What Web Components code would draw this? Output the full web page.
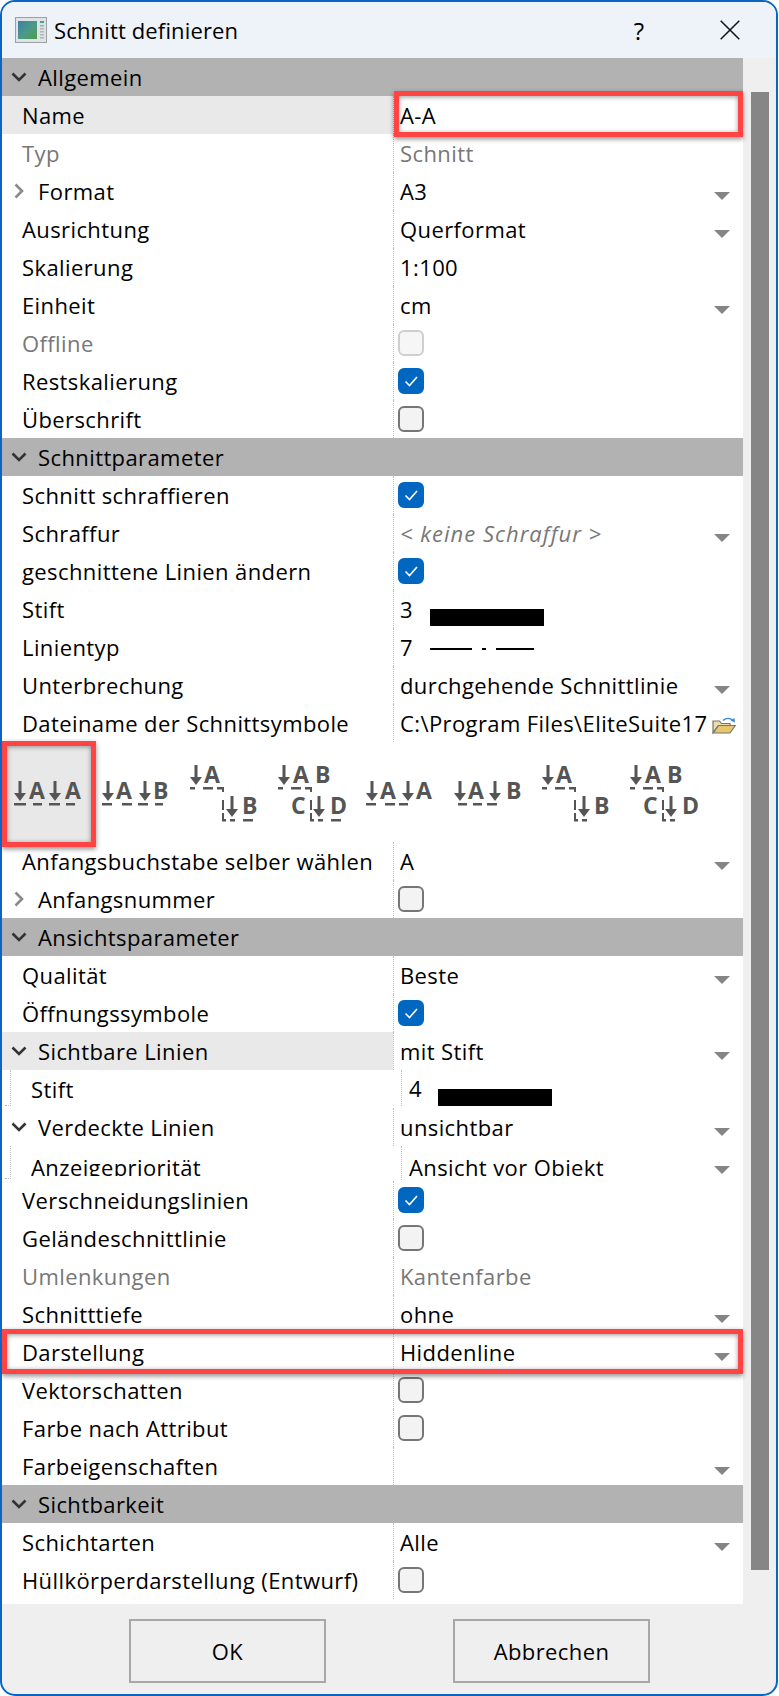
<!DOCTYPE html>
<html lang="de"><head><meta charset="utf-8"><title>Schnitt definieren</title>
<style>
html,body{margin:0;padding:0;background:#fff;width:779px;height:1696px;overflow:hidden}
body{font:22px "Open Sans","Noto Sans",sans-serif;letter-spacing:.4px;color:#000}
</style></head><body>
<x-dialog>
<x-titlebar slot="title">Schnitt definieren</x-titlebar>
<x-section label="Allgemein"></x-section>
<x-row label="Name" value="A-A" hl></x-row>
<x-row label="Typ" value="Schnitt" muted labelmuted></x-row>
<x-row label="Format" value="A3" kind="drop" exp="closed"></x-row>
<x-row label="Ausrichtung" value="Querformat" kind="drop"></x-row>
<x-row label="Skalierung" value="1:100"></x-row>
<x-row label="Einheit" value="cm" kind="drop"></x-row>
<x-row label="Offline" kind="disabled" labelmuted></x-row>
<x-row label="Restskalierung" kind="checked"></x-row>
<x-row label="Überschrift" kind="check"></x-row>
<x-section label="Schnittparameter"></x-section>
<x-row label="Schnitt schraffieren" kind="checked"></x-row>
<x-row label="Schraffur" value="&lt; keine Schraffur &gt;" kind="drop" italic></x-row>
<x-row label="geschnittene Linien ändern" kind="checked"></x-row>
<x-row label="Stift" value="3"><x-pen></x-pen></x-row>
<x-row label="Linientyp" value="7"><x-pen type="dash"></x-pen></x-row>
<x-row label="Unterbrechung" value="durchgehende Schnittlinie" kind="drop"></x-row>
<x-row label="Dateiname der Schnittsymbole" value="C:\Program Files\EliteSuite17" kind="folder"></x-row>
<x-symbols></x-symbols>
<x-row label="Anfangsbuchstabe selber wählen" value="A" kind="drop"></x-row>
<x-row label="Anfangsnummer" kind="check" exp="closed"></x-row>
<x-section label="Ansichtsparameter"></x-section>
<x-row label="Qualität" value="Beste" kind="drop"></x-row>
<x-row label="Öffnungssymbole" kind="checked"></x-row>
<x-row label="Sichtbare Linien" value="mit Stift" kind="drop" exp="open" hl></x-row>
<x-row label="Stift" value="4" sub><x-pen></x-pen></x-row>
<x-row label="Verdeckte Linien" value="unsichtbar" kind="drop" exp="open"></x-row>
<x-row label="Anzeigepriorität" value="Ansicht vor Objekt" kind="drop" sub clip></x-row>
<x-row label="Verschneidungslinien" kind="checked"></x-row>
<x-row label="Geländeschnittlinie" kind="check"></x-row>
<x-row label="Umlenkungen" value="Kantenfarbe" muted labelmuted></x-row>
<x-row label="Schnitttiefe" value="ohne" kind="drop"></x-row>
<x-row label="Darstellung" value="Hiddenline" kind="drop"></x-row>
<x-row label="Vektorschatten" kind="check"></x-row>
<x-row label="Farbe nach Attribut" kind="check"></x-row>
<x-row label="Farbeigenschaften" kind="drop"></x-row>
<x-section label="Sichtbarkeit"></x-section>
<x-row label="Schichtarten" value="Alle" kind="drop"></x-row>
<x-row label="Hüllkörperdarstellung (Entwurf)" kind="check"></x-row>
<x-button slot="buttons" style="margin-left:127px">OK</x-button>
<x-button slot="buttons" style="margin-left:127px">Abbrechen</x-button>
<x-mark slot="marks" box="394,91,349,46"></x-mark>
<x-mark slot="marks" box="2,741,94,106"></x-mark>
<x-mark slot="marks" box="2,1329,741,45"></x-mark>
</x-dialog>
<script>
const H=38;
function def(name,css,html,init){
  customElements.define(name,class extends HTMLElement{
    constructor(){super();this.attachShadow({mode:'open'});}
    connectedCallback(){
      this.shadowRoot.innerHTML='<style>'+css+'</style>'+(typeof html==='function'?html(this):html);
      if(init)init(this);
    }
  });
}
const esc=s=>(s||'').replace(/&/g,'&amp;').replace(/</g,'&lt;').replace(/>/g,'&gt;');
const chev=(open)=>open
 ?'<svg width="16" height="10" viewBox="0 0 16 10"><path d="M1.5 1.500 8 8l6.500-6.500" fill="none" stroke="#333" stroke-width="2.600"/></svg>'
 :'<svg width="10" height="16" viewBox="0 0 10 16"><path d="M1.500 1.500 8 8l-6.500 6.500" fill="none" stroke="#8a8a8a" stroke-width="2.600"/></svg>';

def('x-dialog',`
:host{display:block;position:relative;box-sizing:border-box;width:778px;height:1696px;border:2px solid #0b65c6;border-radius:15px;background:#efefef;overflow:hidden}
.main{display:grid;grid-template-columns:741px 1fr;}
.list{background:#fff;display:flex;flex-direction:column;height:1546px;}
.track{position:relative;background:#efefef}
.thumb{position:absolute;left:8px;width:18px;top:34px;height:1478px;background:#868686}
.foot{display:flex;height:90px;padding-top:15px;box-sizing:border-box}
.marks{position:absolute;left:-2px;top:-2px;width:0;height:0}
`,`<slot name="title"></slot>
<div class="main"><div class="list"><slot></slot></div><div class="track"><div class="thumb"></div></div></div>
<div class="foot"><slot name="buttons"></slot></div>
<div class="marks"><slot name="marks"></slot></div>`);

def('x-titlebar',`
:host{display:flex;align-items:center;height:56px;background:#eef3f9;box-sizing:border-box;padding-left:13px;position:relative;letter-spacing:.15px}
svg.i{margin-right:7px;flex:none}
.t{flex:1}
.q{width:24px;text-align:center;font-size:24px;margin-right:69px}
svg.x{margin-right:36px;flex:none}
`,`<svg class="i" width="32" height="26" viewBox="0 0 32 26">
<defs><linearGradient id="g" x1="0" y1="0" x2="1" y2="1"><stop offset="0" stop-color="#3f7fa8"/><stop offset=".55" stop-color="#4d9a86"/><stop offset="1" stop-color="#4f9a4c"/></linearGradient></defs>
<rect x=".5" y=".5" width="31" height="25" fill="#dfe3e6" stroke="#9aa0a4"/>
<rect x="3" y="4" width="19" height="18" fill="url(#g)"/>
<rect x="25" y="4" width="4" height="2" fill="#4aa09a"/><rect x="25" y="8" width="4" height="1.500" fill="#7fb9b0"/><rect x="25" y="11" width="4" height="1.500" fill="#b0b6ba"/><rect x="25" y="14" width="4" height="1.500" fill="#b0b6ba"/><rect x="25" y="17" width="4" height="1.500" fill="#b0b6ba"/><rect x="25" y="20" width="4" height="1.500" fill="#b0b6ba"/>
</svg><div class="t"><slot></slot></div><div class="q">?</div>
<svg class="x" width="20" height="20" viewBox="0 0 20 20"><path d="M.7.7l18.600 18.600M19.300.7.700 19.300" stroke="#111" stroke-width="1.500" fill="none"/></svg>`);

def('x-section',`
:host{display:flex;align-items:center;height:${H}px;flex:none;background:#b2b2b2;position:relative;box-sizing:border-box}
svg{margin-left:9px;flex:none;width:16px}
span{margin-left:11px}
`,h=>chev(true)+'<span>'+esc(h.getAttribute('label'))+'</span>');

def('x-check',`
:host{display:block;box-sizing:border-box;width:26px;height:26px;border-radius:6px;border:2px solid #767676;background:#f3f3f3}
:host([state=disabled]){border-color:#cfcfcf;background:#f6f6f6}
:host([state=checked]){border-color:#0067c0;background:#0067c0}
svg{display:block}
`,h=>h.getAttribute('state')==='checked'?'<svg width="22" height="22" viewBox="0 0 22 22"><path d="M5.500 11.500 9.500 15.500 17 7" fill="none" stroke="#fff" stroke-width="1.600"/></svg>':'');

def('x-row',`
:host{display:block;height:${H}px;flex:none}
:host([clip]){height:35px}
.r{display:grid;grid-template-columns:391px 1fr;height:100%;position:relative}
.l{display:flex;align-items:center;padding-left:20px;white-space:nowrap;position:relative;box-sizing:border-box;min-width:0;overflow:hidden}
:host([exp]) .l{padding-left:36px}
:host([sub]) .l{padding-left:29px}
:host([hl]) .l{background:#e9e9e9}
:host([labelmuted]) .l{color:#777}
.e{position:absolute;left:9px;top:50%;transform:translateY(-50%);display:flex}
.e.c{left:12px}
.v{display:flex;align-items:center;padding-left:6px;border-left:1px dotted #bdbdbd;white-space:nowrap;position:relative;min-width:0;box-sizing:border-box}
:host([sub]) .v{margin-left:8px;padding-left:7px;height:36px}
:host([clip]) .v{height:34px}
:host([muted]) .v{color:#777}
:host([italic]) .v span{font-style:italic;color:#777;letter-spacing:1px}
:host([clip]) .cl{overflow:hidden;height:30px;line-height:42px;display:block}
:host([clip]) .l,:host([clip]) .v{align-items:flex-start}
.tree{position:absolute;left:8px;top:0;bottom:2px;width:1px;border-left:1px dotted #bdbdbd;display:none}
.tree2{position:absolute;left:3px;bottom:2px;width:6px;border-bottom:1px dotted #bdbdbd;display:none}
:host([sub]) .tree,:host([sub]) .tree2{display:block}
.d{position:absolute;left:320px;top:20px;width:0;height:0;border-left:8px solid transparent;border-right:8px solid transparent;border-top:8px solid #858585}
:host([sub]) .d{left:312px}
x-check{margin-left:-2px;margin-top:-1px}
.f{position:absolute;left:318px;top:13px}
`,h=>{
 const k=h.getAttribute('kind')||'',ex=h.getAttribute('exp'),val=h.getAttribute('value');
 let v='';
 if(val!==null)v+='<span class="cl">'+esc(val)+'</span>';
 v+='<slot></slot>';
 if(k==='drop')v+='<div class="d"></div>';
 if(k==='check')v+='<x-check></x-check>';
 if(k==='checked')v+='<x-check state="checked"></x-check>';
 if(k==='disabled')v+='<x-check state="disabled"></x-check>';
 if(k==='folder')v+=`<svg class="f" width="24" height="17" viewBox="0 0 24 17"><path d="M11 3.500C14 .8 18 .8 21 3.500" fill="none" stroke="#3a8ad8" stroke-width="1.500"/><path d="M23 5.500 22.500 1 18.500 3.500z" fill="#3a8ad8"/><path d="M1 15.500V4h6.500l2 2.500h8.500v2.500H6L1 15.500z" fill="#ecdcae" stroke="#77756a" stroke-width="1.200"/><path d="M1.200 16h16.800L23.300 8.500H6.500z" fill="#e6c670" stroke="#77756a" stroke-width="1.200"/></svg>`;
 const e=ex?`<div class="e ${ex==='open'?'':'c'}">${chev(ex==='open')}</div>`:'';
 return `<div class="r"><div class="l"><div class="tree"></div><div class="tree2"></div>${e}<span class="cl">${esc(h.getAttribute('label'))}</span></div><div class="v">${v}</div></div>`;
});

def('x-pen',`
:host{display:block;position:absolute;left:36px;width:114px;height:17px;top:19px;background:#000}
:host([type=dash]){background:none;height:2px;top:20px;width:104px}
svg{display:block}
`,h=>h.getAttribute('type')==='dash'?'<svg width="104" height="2"><rect width="42" height="2"/><rect x="52" width="4" height="2"/><rect x="66" width="38" height="2"/></svg>':'');

const C='#555';
function arrow(x,y1,y2){return `<path d="M${x} ${y1}V${y2-6}" stroke="${C}" stroke-width="3"/><path d="M${x-6} ${y2-8}h12l-6 8z" fill="${C}"/>`;}
function dash(a,b,y){return `<rect x="${a}" y="${y}" width="${b-a}" height="2.5" fill="${C}"/>`;}
function vd(x,a,b){return `<rect x="${x}" y="${a}" width="2" height="${b-a}" fill="${C}"/>`;}
function tx(s,x,y){return `<text x="${x}" y="${y}">${s}</text>`;}
const pair=(l1,l2,ds,a2,xa,xb)=>arrow(16,42,62)+tx(l1,xa,60)+arrow(a2,42,62)+tx(l2,xb,60)+ds.map(d=>dash(d[0],d[1],64)).join('');
const stepDash=(u)=>dash(10,15,48)+dash(23,33,48)+dash(37,43,48)+vd(42,48,53)+vd(42,61,71)+vd(42,74,82)+dash(42,46,80)+dash(50,55,80)+(u?dash(63,73,80):'');
const step=u=>arrow(16,26,46)+tx('A',24,44)+arrow(52,57,78)+tx('B',62,75)+stepDash(u);
const four=u=>arrow(16,26,46)+tx('A',25,44)+tx('B',47,44)+tx('C',23,75)+arrow(51,57,78)+tx('D',62,75)+stepDash(u);
const icons=[
 pair('A','A',[[10,22],[29,38],[45,56],[62,71]],51,25,61),
 pair('A','B',[[10,20],[30,40],[46,56],[63,71]],53,24,61),
 step(true),four(true),
 pair('A','A',[[10,20],[29,39],[43,52]],52,24,60),
 pair('A','B',[[14,23],[29,38],[43,53]],51,24,62),
 step(false),four(false)];
def('x-symbols',`
:host{display:flex;height:100px;flex:none;padding-left:2px;background:#fff;overflow:hidden}
.c{width:88px;height:100px;flex:none}
.c.a{background:linear-gradient(#e8e8e8,#e8e8e8) 3px 4px/84px 96px no-repeat}
svg{display:block}
text{font:700 23px "Open Sans","Noto Sans",sans-serif;fill:${C};letter-spacing:0}
`,()=>icons.map((s,i)=>`<div class="c ${i?'':'a'}"><svg width="88" height="100" viewBox="0 3 88 100">${s}</svg></div>`).join(''));

def('x-button',`
:host{display:flex;align-items:center;justify-content:center;box-sizing:border-box;width:197px;height:64px;border:2px solid #a8a8a8;background:#efefef;flex:none}
`,'<slot></slot>');

def('x-mark',`
:host{position:absolute;box-sizing:border-box;border:5px solid #ff4444;box-shadow:0 2px 5px rgba(0,0,0,.45),inset 0 1px 5px rgba(0,0,0,.4);pointer-events:none}
`,'',h=>{const [x,y,w,b]=h.getAttribute('box').split(',');h.style.cssText=`left:${x}px;top:${y}px;width:${w}px;height:${b}px`;});
</script>
</body></html>
